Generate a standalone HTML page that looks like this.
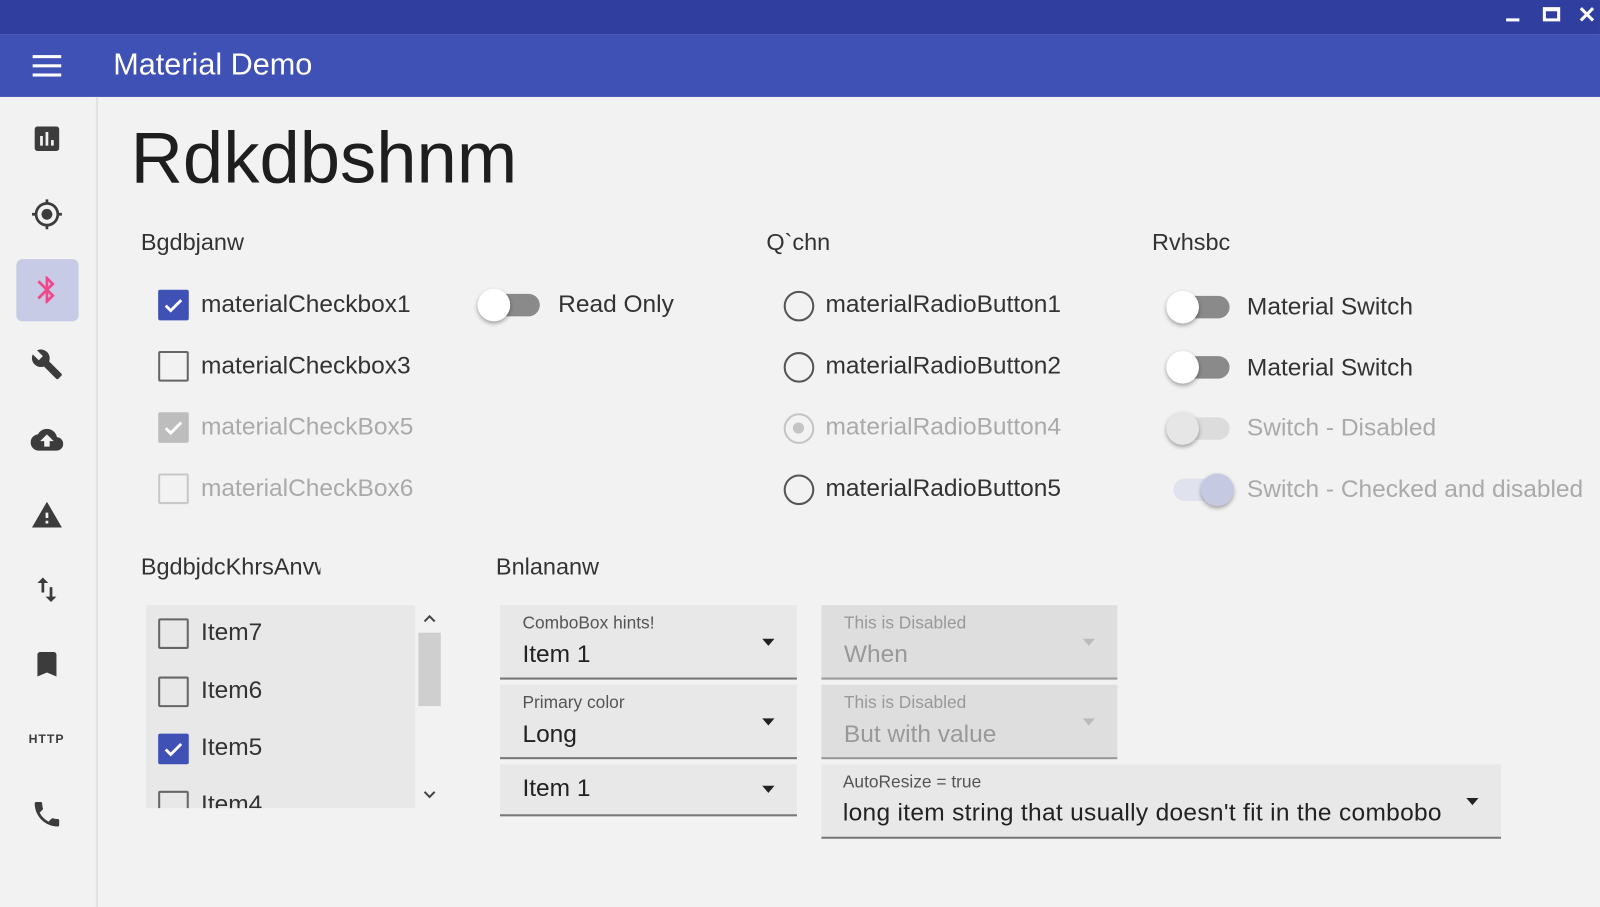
<!DOCTYPE html>
<html><head><meta charset="utf-8"><style>
html,body{margin:0;padding:0;width:1600px;height:907px;overflow:hidden;background:#f2f2f2}
#w{position:absolute;left:0;top:0;width:1568px;height:889px;transform:scale(1.0204);transform-origin:0 0;font-family:"Liberation Sans",sans-serif;background:#f2f2f2}
.a{position:absolute}
.t{position:absolute;font-size:24px;color:#333;white-space:nowrap;line-height:30px}
.h{position:absolute;font-size:23px;color:#333;white-space:nowrap;line-height:28px}
.cb{position:absolute;border:2px solid #666;border-radius:2px;box-sizing:border-box;width:30px;height:30px}
.cbc{background:#3f51b5;border-color:#3f51b5}
.rd{position:absolute;width:30px;height:30px;border:2.5px solid #555;border-radius:50%;box-sizing:border-box}
.trk{position:absolute;width:48px;height:22px;border-radius:11px;background:#8a8a8a}
.thm{position:absolute;width:32px;height:32px;border-radius:50%;background:#fff;box-shadow:0 2px 4px rgba(0,0,0,.35)}
.ic{position:absolute;width:32px;height:32px;fill:#3c3c3c}
.cmb{position:absolute;background:#e8e8e8;border-bottom:2px solid #777;box-sizing:border-box}
.hint{position:absolute;font-size:17px;color:#555;left:22px;top:8px;white-space:nowrap}
.val{position:absolute;font-size:24px;color:#222;left:22px;white-space:nowrap}
.arr{position:absolute;width:0;height:0;border-left:6px solid transparent;border-right:6px solid transparent;border-top:7px solid #222}
</style></head><body><div id="w">
<div class="a" style="left:0;top:0;width:1568px;height:34px;background:#303f9f"></div>
<div class="a" style="left:1476px;top:18px;width:13px;height:3px;background:#fff"></div>
<div class="a" style="left:1512px;top:7px;width:17px;height:14px;border:3px solid #fff;border-top-width:4px;box-sizing:border-box"></div>
<div class="a" style="left:1546px;top:4px;color:#fff;font-size:22px;font-weight:bold;line-height:22px">✕</div>
<div class="a" style="left:0;top:34px;width:1568px;height:61px;background:#3f51b5"></div>
<div class="a" style="left:32px;top:54px;width:28px;height:3px;background:#fff;box-shadow:0 9px 0 #fff,0 18px 0 #fff"></div>
<div class="a" style="left:111px;top:46px;font-size:30px;color:#fff;line-height:36px">Material Demo</div>
<div class="a" style="left:94px;top:95px;width:2px;height:794px;background:#e2e2e2"></div>
<div class="a" style="left:16px;top:254px;width:61px;height:61px;background:#c8cbe6;border-radius:6px"></div>
<svg class="ic" style="left:30px;top:120px" viewBox="0 0 24 24"><path d="M19 3H5c-1.1 0-2 .9-2 2v14c0 1.1.9 2 2 2h14c1.1 0 2-.9 2-2V5c0-1.1-.9-2-2-2zM9 17H7v-7h2v7zm4 0h-2V7h2v10zm4 0h-2v-4h2v4z"/></svg>
<svg class="ic" style="left:30px;top:194px" viewBox="0 0 24 24"><path d="M12 8c-2.21 0-4 1.79-4 4s1.79 4 4 4 4-1.79 4-4-1.79-4-4-4zm8.94 3A8.994 8.994 0 0013 3.06V1h-2v2.06A8.994 8.994 0 003.06 11H1v2h2.06A8.994 8.994 0 0011 20.94V23h2v-2.06A8.994 8.994 0 0020.94 13H23v-2h-2.06zM12 19c-3.87 0-7-3.13-7-7s3.13-7 7-7 7 3.13 7 7-3.13 7-7 7z"/></svg>
<svg class="ic" style="left:30px;top:268px;fill:#f0478a" viewBox="0 0 24 24"><path d="M17.71 7.71L12 2h-1v7.59L6.41 5 5 6.41 10.59 12 5 17.59 6.41 19 11 14.41V22h1l5.71-5.71-4.3-4.29 4.3-4.29zM13 5.83l1.88 1.88L13 9.59V5.83zm1.88 10.46L13 18.17v-3.76l1.88 1.88z"/></svg>
<svg class="ic" style="left:30px;top:341px" viewBox="0 0 24 24"><path d="M22.7 19l-9.1-9.1c.9-2.3.4-5-1.5-6.9-2-2-5-2.4-7.4-1.3L9 6 6 9 1.6 4.7C.4 7.1.9 10.1 2.9 12.1c1.9 1.9 4.6 2.4 6.9 1.5l9.1 9.1c.4.4 1 .4 1.4 0l2.3-2.3c.5-.4.5-1.1.1-1.4z"/></svg>
<svg class="ic" style="left:30px;top:415px" viewBox="0 0 24 24"><path d="M19.35 10.04C18.67 6.59 15.64 4 12 4 9.11 4 6.6 5.64 5.35 8.04 2.34 8.36 0 10.91 0 14c0 3.31 2.69 6 6 6h13c2.76 0 5-2.24 5-5 0-2.64-2.05-4.78-4.65-4.96zM14 13v4h-4v-4H7l5-5 5 5h-3z"/></svg>
<svg class="ic" style="left:30px;top:489px" viewBox="0 0 24 24"><path d="M1 21h22L12 2 1 21zm12-3h-2v-2h2v2zm0-4h-2v-4h2v4z"/></svg>
<svg class="ic" style="left:30px;top:562px" viewBox="0 0 24 24"><path d="M9 3L5 6.99h3V14h2V6.99h3L9 3zm7 14.01V10h-2v7.01h-3L15 21l4-3.99h-3z"/></svg>
<svg class="ic" style="left:30px;top:635px" viewBox="0 0 24 24"><path d="M17 3H7c-1.1 0-1.99.9-1.99 2L5 21l7-3 7 3V5c0-1.1-.9-2-2-2z"/></svg>
<div class="a" style="left:28px;top:717px;font-size:12px;font-weight:bold;color:#3c3c3c;letter-spacing:1px">HTTP</div>
<svg class="ic" style="left:30px;top:782px" viewBox="0 0 24 24"><path d="M6.62 10.79c1.44 2.83 3.76 5.14 6.59 6.59l2.2-2.2c.27-.27.67-.36 1.02-.24 1.12.37 2.33.57 3.57.57.55 0 1 .45 1 1V20c0 .55-.45 1-1 1-9.39 0-17-7.61-17-17 0-.55.45-1 1-1h3.5c.55 0 1 .45 1 1 0 1.25.2 2.45.57 3.57.11.35.03.74-.25 1.02l-2.2 2.2z"/></svg>

<div class="a" style="left:128px;top:114px;font-size:71px;color:#1e1e1e;line-height:84px">Rdkdbshnm</div>
<div class="h" style="left:138px;top:223px">Bgdbjanw</div>
<div class="h" style="left:751px;top:223px">Q`chn</div>
<div class="h" style="left:1129px;top:223px;width:76px;overflow:hidden">Rvhsbcg</div>

<div class="cb cbc" style="left:155px;top:284px"><svg width="26" height="26" viewBox="0 0 24 24" style="position:absolute;left:0;top:0"><path d="M5 12.5l4.5 4.5L19 7.5" stroke="#fff" stroke-width="2.6" fill="none"/></svg></div>
<div class="t" style="left:197px;top:284px">materialCheckbox1</div>
<div class="cb" style="left:155px;top:344px"></div>
<div class="t" style="left:197px;top:344px">materialCheckbox3</div>
<div class="cb" style="left:155px;top:404px;background:#bdbdbd;border-color:#bdbdbd"><svg width="26" height="26" viewBox="0 0 24 24" style="position:absolute;left:0;top:0"><path d="M5 12.5l4.5 4.5L19 7.5" stroke="#fff" stroke-width="2.6" fill="none"/></svg></div>
<div class="t" style="left:197px;top:404px;color:#aaa">materialCheckBox5</div>
<div class="cb" style="left:155px;top:464px;border-color:#c8c8c8"></div>
<div class="t" style="left:197px;top:464px;color:#aaa">materialCheckBox6</div>

<div class="trk" style="left:481px;top:288px"></div><div class="thm" style="left:468px;top:283px"></div>
<div class="t" style="left:547px;top:284px">Read Only</div>

<div class="rd" style="left:768px;top:285px"></div><div class="t" style="left:809px;top:284px">materialRadioButton1</div>
<div class="rd" style="left:768px;top:345px"></div><div class="t" style="left:809px;top:344px">materialRadioButton2</div>
<div class="rd" style="left:768px;top:405px;border-color:#c4c4c4"><div class="a" style="left:7px;top:7px;width:11px;height:11px;border-radius:50%;background:#c4c4c4"></div></div><div class="t" style="left:809px;top:404px;color:#aaa">materialRadioButton4</div>
<div class="rd" style="left:768px;top:465px"></div><div class="t" style="left:809px;top:464px">materialRadioButton5</div>

<div class="trk" style="left:1157px;top:290px"></div><div class="thm" style="left:1143px;top:285px"></div>
<div class="t" style="left:1222px;top:286px">Material Switch</div>
<div class="trk" style="left:1157px;top:349px"></div><div class="thm" style="left:1143px;top:344px"></div>
<div class="t" style="left:1222px;top:346px">Material Switch</div>
<div class="trk" style="left:1157px;top:409px;background:#dcdcdc"></div><div class="thm" style="left:1143px;top:404px;background:#e6e6e6"></div>
<div class="t" style="left:1222px;top:405px;color:#aaa">Switch - Disabled</div>
<div class="trk" style="left:1150px;top:469px;background:#e0e2ee"></div><div class="thm" style="left:1177px;top:464px;background:#c6c9e2"></div>
<div class="t" style="left:1222px;top:465px;color:#aaa">Switch - Checked and disabled</div>

<div class="h" style="left:138px;top:541px;width:176px;overflow:hidden">BgdbjdcKhrsAnvw</div>
<div class="h" style="left:486px;top:541px">Bnlananw</div>

<div class="a" style="left:143px;top:593px;width:264px;height:199px;background:#e8e8e8;overflow:hidden">
<div class="cb" style="left:12px;top:13px"></div><div class="t" style="left:54px;top:12px">Item7</div>
<div class="cb" style="left:12px;top:70px"></div><div class="t" style="left:54px;top:69px">Item6</div>
<div class="cb cbc" style="left:12px;top:126px"><svg width="26" height="26" viewBox="0 0 24 24" style="position:absolute;left:0;top:0"><path d="M5 12.5l4.5 4.5L19 7.5" stroke="#fff" stroke-width="2.6" fill="none"/></svg></div><div class="t" style="left:54px;top:125px">Item5</div>
<div class="cb" style="left:12px;top:182px"></div><div class="t" style="left:54px;top:181px">Item4</div>
</div>
<div class="a" style="left:410px;top:620px;width:22px;height:72px;background:#cfcfcf"></div>
<svg class="a" style="left:413px;top:600px" width="16" height="12" viewBox="0 0 16 12"><path d="M3 9l5-5 5 5" stroke="#444" stroke-width="2" fill="none"/></svg>
<svg class="a" style="left:413px;top:773px" width="16" height="12" viewBox="0 0 16 12"><path d="M3 3l5 5 5-5" stroke="#444" stroke-width="2" fill="none"/></svg>

<div class="cmb" style="left:490px;top:593px;width:291px;height:73px"><div class="hint">ComboBox hints!</div><div class="val" style="top:35px">Item 1</div><div class="arr" style="left:257px;top:33px"></div></div>
<div class="cmb" style="left:490px;top:671px;width:291px;height:73px"><div class="hint">Primary color</div><div class="val" style="top:35px">Long</div><div class="arr" style="left:257px;top:33px"></div></div>
<div class="cmb" style="left:490px;top:749px;width:291px;height:51px"><div class="val" style="top:10px">Item 1</div><div class="arr" style="left:257px;top:21px"></div></div>
<div class="cmb" style="left:805px;top:593px;width:290px;height:73px;background:#dedede;border-color:#999"><div class="hint" style="color:#999">This is Disabled</div><div class="val" style="top:35px;color:#999">When</div><div class="arr" style="left:256px;top:33px;border-top-color:#bbb"></div></div>
<div class="cmb" style="left:805px;top:671px;width:290px;height:73px;background:#dedede;border-color:#999"><div class="hint" style="color:#999">This is Disabled</div><div class="val" style="top:35px;color:#999">But with value</div><div class="arr" style="left:256px;top:33px;border-top-color:#bbb"></div></div>
<div class="cmb" style="left:805px;top:749px;width:666px;height:73px"><div class="hint" style="left:21px">AutoResize = true</div><div class="val" style="top:34px;left:21px;letter-spacing:0.3px">long item string that usually doesn't fit in the combobo</div><div class="arr" style="left:632px;top:33px"></div></div>
</div></body></html>
